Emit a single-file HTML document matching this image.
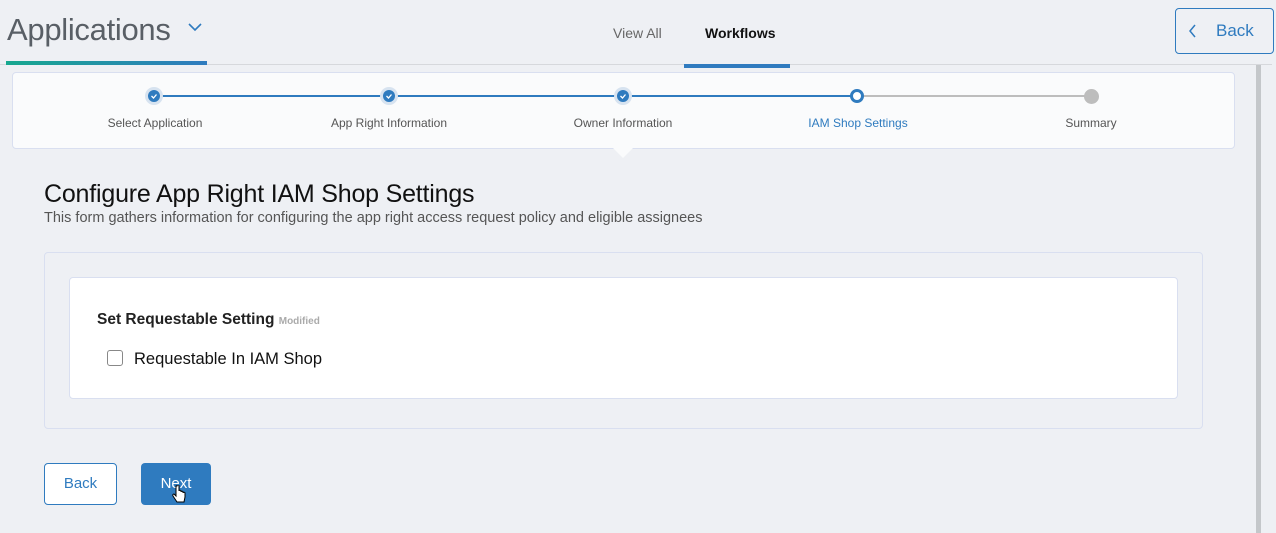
<!DOCTYPE html>
<html><head><meta charset="utf-8"><style>
*{box-sizing:border-box;margin:0;padding:0}
body{width:1276px;height:533px;background:#eef0f4;font-family:"Liberation Sans",sans-serif;position:relative;overflow:hidden;color:#222}
.a{position:absolute;white-space:nowrap}
.step{position:absolute;top:87px;width:18px;height:18px;border-radius:50%;background:#d7e3f0}
.step i{position:absolute;left:3px;top:3px;width:12px;height:12px;border-radius:50%;background:#2f7bbf}
.lbl{position:absolute;top:116px;font-size:12px;color:#555;transform:translateX(-50%);white-space:nowrap}
</style></head><body>
<div class="a" style="left:7px;top:12px;font-size:31px;color:#595f66;letter-spacing:-0.3px">Applications</div>
<svg class="a" style="left:187px;top:22px" width="16" height="10"><path d="M2 2 L8 8 L14 2" fill="none" stroke="#2f7bbf" stroke-width="1.6"/></svg>
<div class="a" style="left:0;top:64px;width:1272px;height:1px;background:#d6d8dc"></div>
<div class="a" style="left:6px;top:61px;width:201px;height:4px;background:linear-gradient(90deg,#17a88f,#2f7bbf)"></div>
<div class="a" style="left:613px;top:25px;font-size:14px;color:#666">View All</div>
<div class="a" style="left:705px;top:25px;font-size:14px;font-weight:bold;color:#111">Workflows</div>
<div class="a" style="left:684px;top:64px;width:106px;height:4px;background:#2f7bbf"></div>
<div class="a" style="left:1175px;top:8px;width:99px;height:46px;border:1px solid #2f7bbf;border-radius:4px"></div>
<svg class="a" style="left:1188px;top:24px" width="10" height="14"><path d="M7 1 L2 7 L7 13" fill="none" stroke="#2f7bbf" stroke-width="1.5"/></svg>
<div class="a" style="left:1216px;top:21px;font-size:17px;color:#2f7bbf">Back</div>
<div class="a" style="left:1256px;top:65px;width:5px;height:468px;background:#c4c7ca"></div>
<div class="a" style="left:12px;top:72px;width:1223px;height:77px;background:#fafbfc;border:1px solid #d9dff0;border-radius:4px"></div>
<div class="a" style="left:613px;top:148px;width:0;height:0;border-left:10px solid transparent;border-right:10px solid transparent;border-top:10px solid #fafbfc"></div>
<div class="a" style="left:154px;top:95px;width:703px;height:2px;background:#2f7bbf"></div>
<div class="a" style="left:857px;top:95px;width:234px;height:2px;background:#bdbdbd"></div>
<div class="step" style="left:145px"><i></i></div>
<div class="step" style="left:380px"><i></i></div>
<div class="step" style="left:614px"><i></i></div>
<svg class="a" style="left:149px;top:91px" width="10" height="10"><path d="M2.5 5 L4.5 7 L7.5 3.5" fill="none" stroke="#fff" stroke-width="1.3"/></svg>
<svg class="a" style="left:384px;top:91px" width="10" height="10"><path d="M2.5 5 L4.5 7 L7.5 3.5" fill="none" stroke="#fff" stroke-width="1.3"/></svg>
<svg class="a" style="left:618px;top:91px" width="10" height="10"><path d="M2.5 5 L4.5 7 L7.5 3.5" fill="none" stroke="#fff" stroke-width="1.3"/></svg>
<div class="a" style="left:850px;top:89px;width:14px;height:14px;border-radius:50%;background:#fff;border:3px solid #2f7bbf"></div>
<div class="a" style="left:1084px;top:89px;width:15px;height:15px;border-radius:50%;background:#bdbdbd"></div>
<div class="lbl" style="left:155px">Select Application</div>
<div class="lbl" style="left:389px">App Right Information</div>
<div class="lbl" style="left:623px">Owner Information</div>
<div class="lbl" style="left:858px;color:#2f7bbf">IAM Shop Settings</div>
<div class="lbl" style="left:1091px">Summary</div>
<div class="a" style="left:44px;top:180px;font-size:25px;color:#111;letter-spacing:-0.2px">Configure App Right IAM Shop Settings</div>
<div class="a" style="left:44px;top:210px;font-size:14.5px;color:#555;letter-spacing:0px">This form gathers information for configuring the app right access request policy and eligible assignees</div>
<div class="a" style="left:44px;top:252px;width:1159px;height:177px;border:1px solid #d9dff0;border-radius:4px;background:#eef0f4"></div>
<div class="a" style="left:69px;top:277px;width:1109px;height:122px;background:#fff;border:1px solid #d9dff0;border-radius:4px"></div>
<div class="a" style="left:97px;top:311px;font-size:15.5px;font-weight:bold;color:#222">Set Requestable Setting <span style="font-size:10px;color:#aaa">Modified</span></div>
<div class="a" style="left:107px;top:350px;width:16px;height:16px;border:1px solid #888;border-radius:3px;background:#fff"></div>
<div class="a" style="left:134px;top:350px;font-size:16.5px;color:#111">Requestable In IAM Shop</div>
<div class="a" style="left:44px;top:463px;width:73px;height:42px;border:1px solid #2f7bbf;border-radius:4px;background:#fff;color:#2f7bbf;font-size:15px;text-align:center;line-height:40px">Back</div>
<div class="a" style="left:141px;top:463px;width:70px;height:42px;border-radius:4px;background:#2f7bbf;color:#fff;font-size:15px;text-align:center;line-height:42px">Next</div>
<svg class="a" style="left:172px;top:485px" width="14" height="20"><path d="M4 1 v10 l-2-2 c-1 0-1.5 1-1 2 l4 6 h7 l1-5 v-4 c0-1-2-1-2 0 v-1 c0-1-2-1-2 0 v-1 c0-1-2-1-2 0 v-5 c0-1.5-2-1.5-2 0z" fill="#fff" stroke="#000" stroke-width="1"/></svg>
</body></html>
